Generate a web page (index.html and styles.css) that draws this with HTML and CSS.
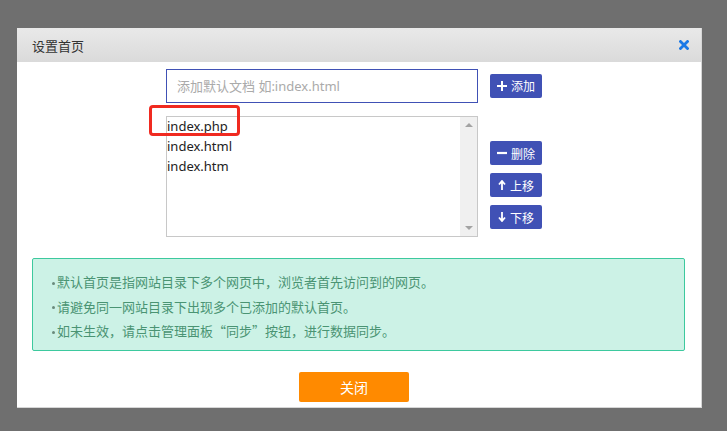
FILE: index.html
```html
<!DOCTYPE html>
<html lang="zh-CN">

<head>
    <meta charset="UTF-8">
    <meta name="viewport" content="width=device-width, initial-scale=1.0">
    <title>设置首页</title>
    <link rel="stylesheet" href="styles.css">
</head>

<body>
    <div class="dialog">
        <div class="dialog-header">
            <span class="dialog-title">设置首页</span>
            <span class="dialog-close">
                <svg width="10" height="10" viewBox="0 0 10 10">
                    <path d="M1.5 1.5 L8.5 8.5 M8.5 1.5 L1.5 8.5" stroke="#1a78e6" stroke-width="2.8" stroke-linecap="square" />
                </svg>
            </span>
        </div>

        <div class="dialog-body">
            <div class="add-row">
                <input type="text" class="doc-input" placeholder="添加默认文档 如:index.html">
                <button type="button" class="btn btn-blue">
                    <svg width="10" height="10" viewBox="0 0 10 10"><path d="M5 0 V10 M0 5 H10" stroke="#fff" stroke-width="2" /></svg>
                    添加
                </button>
            </div>

            <div class="list-row">
                <div class="doc-list">
                    <div class="doc-items">
                        <div class="doc-item">index.php</div>
                        <div class="doc-item">index.html</div>
                        <div class="doc-item">index.htm</div>
                    </div>
                    <div class="scrollbar">
                        <span class="arrow-up"></span>
                        <span class="arrow-down"></span>
                    </div>
                </div>
                <div class="list-actions">
                    <button type="button" class="btn btn-blue">
                        <svg width="10" height="10" viewBox="0 0 10 10"><path d="M0 5 H10" stroke="#fff" stroke-width="2.2" /></svg>
                        删除
                    </button>
                    <button type="button" class="btn btn-blue">
                        <svg width="8" height="10" viewBox="0 0 8 10"><path d="M4 10 V2 M1 4.5 L4 1 L7 4.5" stroke="#fff" stroke-width="1.8" fill="none" /></svg>
                        上移
                    </button>
                    <button type="button" class="btn btn-blue">
                        <svg width="8" height="10" viewBox="0 0 8 10"><path d="M4 0 V8 M1 5.5 L4 9 L7 5.5" stroke="#fff" stroke-width="1.8" fill="none" /></svg>
                        下移
                    </button>
                </div>
                <!-- annotation -->
                <div class="mark"></div>
            </div>

            <ul class="tips">
                <li>默认首页是指网站目录下多个网页中，浏览者首先访问到的网页。</li>
                <li>请避免同一网站目录下出现多个已添加的默认首页。</li>
                <li>如未生效，请点击管理面板“同步”按钮，进行数据同步。</li>
            </ul>

            <div class="dialog-footer">
                <button type="button" class="btn-close">关闭</button>
            </div>
        </div>
    </div>
</body>

</html>
```

FILE: styles.css
```css
body {
    margin: 0;
    padding: 28px 0 0 17px;
    height: 431px;
    box-sizing: border-box;
    background-color: #6f6f6f;
    font-family: "Noto Sans", "Noto Sans CJK SC", sans-serif;
    overflow: hidden;
}

.dialog {
    width: 685px;
    height: 380px;
    background-color: #ffffff;
    border-right: 1px solid #d6d6d6;
    border-bottom: 1px solid #d6d6d6;
    box-sizing: border-box;
}

.dialog-header {
    height: 34px;
    padding: 0 12px 0 15px;
    display: flex;
    justify-content: space-between;
    align-items: center;
    background: linear-gradient(#e9e9e9, #dadada);
}

.dialog-title {
    font-size: 13px;
    color: #333333;
    font-family: "Noto Sans CJK SC", sans-serif;
}

.dialog-close {
    display: flex;
    cursor: pointer;
}

.dialog-body {
    padding-top: 7px;
}

.add-row {
    display: flex;
    align-items: center;
    padding-left: 149px;
}

.doc-input {
    width: 312px;
    height: 34px;
    box-sizing: border-box;
    border: 1px solid #4051b5;
    padding: 0 10px;
    font-size: 13px;
    font-family: inherit;
    outline: none;
}

.doc-input::placeholder {
    color: #aaaaaa;
}

.btn {
    height: 24px;
    width: 52px;
    border: none;
    border-radius: 2px;
    font-size: 12px;
    font-family: "Noto Sans CJK SC", sans-serif;
    cursor: pointer;
    display: flex;
    align-items: center;
    justify-content: center;
    gap: 4px;
    padding: 0;
}

.btn-blue {
    background-color: #4051b5;
    color: #ffffff;
}

.add-row .btn {
    margin-left: 12px;
    margin-top: -1px;
}

.list-row {
    position: relative;
    display: flex;
    padding-left: 149px;
    margin-top: 13px;
}

.doc-list {
    width: 312px;
    height: 121px;
    box-sizing: border-box;
    border: 1px solid #c8c8c8;
    display: flex;
}

.doc-items {
    flex: 1;
    margin-top: -1px;
    font-size: 13px;
    line-height: 20px;
    color: #222222;
}

.doc-item {
    height: 20px;
}

.scrollbar {
    width: 17px;
    background-color: #f0f0f0;
    position: relative;
}

.arrow-up,
.arrow-down {
    position: absolute;
    left: 5px;
    width: 0;
    height: 0;
    border-left: 4px solid transparent;
    border-right: 4px solid transparent;
}

.arrow-up {
    top: 6px;
    border-bottom: 4px solid #a3a3a3;
}

.arrow-down {
    bottom: 6px;
    border-top: 4px solid #a3a3a3;
}

.list-actions {
    margin-left: 12px;
    padding-top: 25px;
    display: flex;
    flex-direction: column;
    gap: 8px;
}

.mark {
    position: absolute;
    left: 132px;
    top: -11px;
    width: 91px;
    height: 31px;
    box-sizing: border-box;
    border: 3px solid #f02a20;
    border-radius: 4px;
}

.tips {
    list-style: none;
    margin: 21px 16px 0 15px;
    padding: 11px 19px 6px;
    background-color: #ccf2e6;
    border: 1px solid #3dc99e;
    border-radius: 2px;
    font-size: 13px;
    color: #4a9473;
    font-family: "Noto Sans CJK SC", sans-serif;
}

.tips li {
    height: 24.5px;
    line-height: 24.5px;
}

.tips li::before {
    content: "";
    display: inline-block;
    width: 3px;
    height: 3px;
    border-radius: 50%;
    background-color: #6a8a7c;
    vertical-align: middle;
    margin-right: 2px;
}

.dialog-footer {
    padding: 21px 0 0 282px;
}

.btn-close {
    width: 110px;
    height: 30px;
    border: none;
    border-radius: 2px;
    background-color: #ff8a00;
    color: #ffffff;
    font-size: 14px;
    font-family: "Noto Sans CJK SC", sans-serif;
    cursor: pointer;
    vertical-align: top;
}
```
